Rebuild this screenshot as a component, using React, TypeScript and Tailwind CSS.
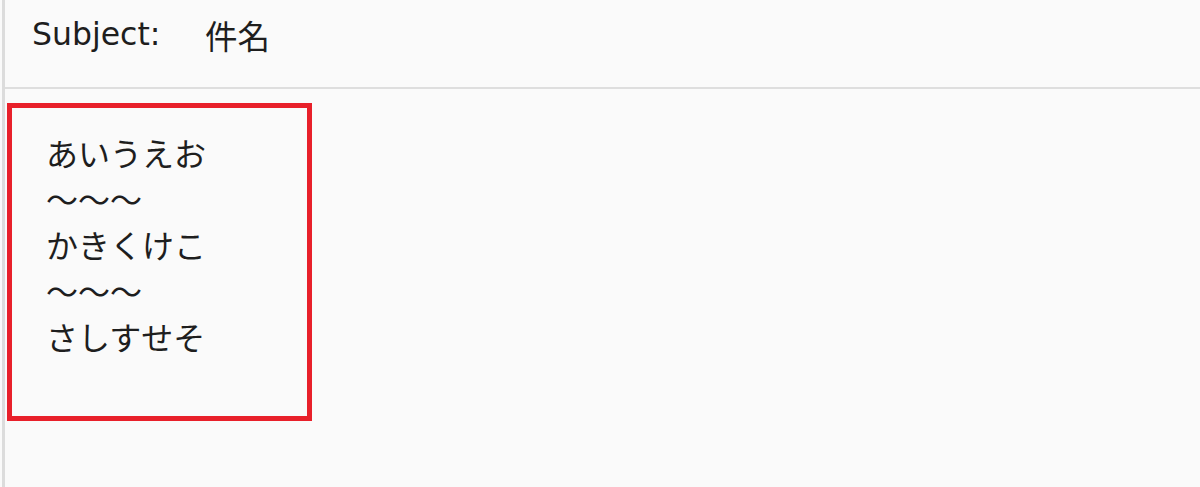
export default function App() {
  const font = { fontFamily: '"Noto Sans CJK JP", "Noto Sans", sans-serif' };
  const latin = { fontFamily: '"DejaVu Sans", "Noto Sans CJK JP", sans-serif' };
  return (
    <div className="w-[1200px] h-[487px] bg-[#fafafa] overflow-hidden pl-[2px]" style={font}>
      <div className="h-full border-l-[3px] border-[#dcdcdc] flex flex-col">
        <div className="h-[89px] shrink-0 border-b-[2px] border-[#dedede] flex items-center pl-[27px] text-[32.5px] text-[#1e1e1e] pb-[17px]">
          <span className="w-[173px] text-[31.5px]" style={latin}>Subject:</span>
          <span>件名</span>
        </div>
        <div className="pt-[14px] pl-[2px]">
          <div className="w-[305px] h-[318px] border-[5px] border-[#e8202a] pl-[34px] pt-[21px] text-[32px] leading-[46px] text-[#1e1e1e]">
            <div>あいうえお</div>
            <div>〜〜〜</div>
            <div>かきくけこ</div>
            <div>〜〜〜</div>
            <div>さしすせそ</div>
          </div>
        </div>
      </div>
    </div>
  );
}
